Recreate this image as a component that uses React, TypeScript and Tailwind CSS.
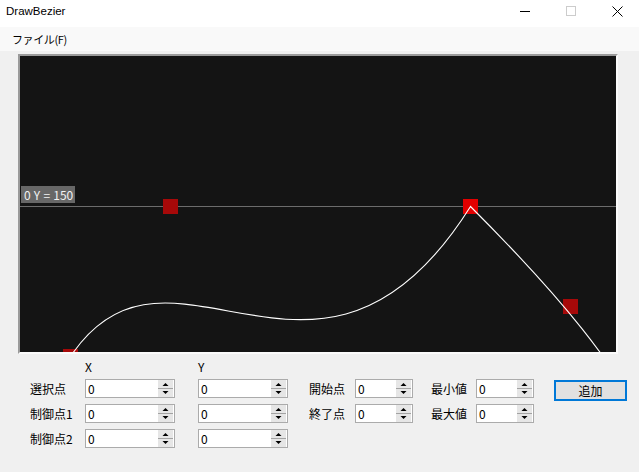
import React from "react";

const JP = { fontFamily: '"Noto Sans CJK JP", "Noto Sans", sans-serif' };

function Spinner() {
  return (
    <svg width="15" height="17" viewBox="0 0 15 17" className="block">
      <rect x="0" y="0" width="15" height="17" fill="#e6e6e6" />
      <rect x="0" y="8" width="15" height="1" fill="#a3a3a3" />
      <polygon points="4.5,6 10.5,6 7.5,3" fill="#000" />
      <polygon points="4.5,11 10.5,11 7.5,14" fill="#000" />
    </svg>
  );
}

function NumBox({ wide }: { wide?: boolean }) {
  return (
    <div
      className={`${wide ? "w-[90px]" : "w-[58px]"} h-[19px] border border-[#ababab] bg-white flex items-stretch`}
    >
      <div className="flex-1 pl-[2px] text-[12px] leading-[17px] text-black">0</div>
      <div className="py-0 pr-[1px]">
        <Spinner />
      </div>
    </div>
  );
}

function Label({ children, cls }: { children: React.ReactNode; cls: string }) {
  return <div className={`${cls} flex items-center text-[12px] text-black whitespace-nowrap`}>{children}</div>;
}

export default function App() {
  return (
    <div className="w-[639px] h-[472px] overflow-hidden bg-[#f0f0f0] flex flex-col" style={JP}>
      {/* title bar */}
      <div className="w-[640px] shrink-0 h-[27px] bg-white flex items-start">
        <div
          className="pl-[6px] pt-[5px] text-[11.5px] leading-[13px] text-black"
          style={{ fontFamily: '"Liberation Sans", "Noto Sans", sans-serif' }}
        >
          DrawBezier
        </div>
        <div className="ml-auto flex">
          <div className="w-[46px] h-[22px] flex items-center justify-center">
            <svg width="10" height="10" viewBox="0 0 10 10">
              <rect x="0" y="5" width="10" height="1" fill="#000" />
            </svg>
          </div>
          <div className="w-[46px] h-[22px] flex items-center justify-center">
            <svg width="10" height="10" viewBox="0 0 10 10">
              <rect x="0.5" y="0.5" width="9" height="9" fill="none" stroke="#cccccc" strokeWidth="1" />
            </svg>
          </div>
          <div className="w-[46px] h-[22px] flex items-center justify-center">
            <svg width="11" height="11" viewBox="0 0 11 11">
              <path d="M0.5 0.5 L10.5 10.5 M10.5 0.5 L0.5 10.5" stroke="#000" strokeWidth="1" />
            </svg>
          </div>
        </div>
      </div>

      {/* menu bar */}
      <div className="h-[24px] bg-[#f9f9f9] flex items-center pl-[12px]">
        <span className="text-[11px] tracking-[-0.4px] text-black">ファイル(F)</span>
      </div>

      {/* canvas */}
      <div className="mt-[3px] ml-[18px] w-[600px] h-[300px] border-2 border-t-[#9a9a9a] border-l-[#9a9a9a] border-r-[#fbfbfb] border-b-[#fbfbfb] bg-[#141414] relative overflow-hidden">
        <svg width="596" height="296" viewBox="20 56 596 296" className="absolute inset-0 block">
          <rect x="20" y="206" width="596" height="1" fill="#6c6c6c" shapeRendering="crispEdges" />
          <rect x="163" y="199" width="15" height="15" fill="#a60909" shapeRendering="crispEdges" />
          <rect x="463" y="199" width="15" height="15" fill="#e20000" shapeRendering="crispEdges" />
          <rect x="563" y="299" width="15" height="15" fill="#a60909" shapeRendering="crispEdges" />
          <rect x="63" y="349" width="15" height="15" fill="#a60909" shapeRendering="crispEdges" />
          <path
            d="M70.5 356.5 C170.5 206.5, 320 446, 470.5 206.5 C570.5 306.5, 605 355, 660 440"
            fill="none"
            stroke="#ffffff"
            strokeWidth="1.1"
          />
        </svg>
        <div className="absolute left-[1px] top-[130px] w-[54px] h-[17px] bg-[#676767] text-[#f2f2f2] text-[12px] leading-[17px] pl-[3px] whitespace-pre [word-spacing:0.5px]">
          0 Y = 150
        </div>
      </div>

      {/* controls */}
      <div className="ml-[30px] grid grid-cols-[55px_90px_23px_90px_21px_46px_58px_18px_45px_58px_20px_73px] grid-rows-[19px_19px_19px_19px] gap-y-[6px]">
        <div className="col-start-2 row-start-1 flex items-end text-[12px] leading-[13px] text-black">X</div>
        <div className="col-start-4 row-start-1 flex items-end text-[12px] leading-[13px] text-black">Y</div>

        <Label cls="col-start-1 row-start-2">選択点</Label>
        <div className="col-start-2 row-start-2"><NumBox wide /></div>
        <div className="col-start-4 row-start-2"><NumBox wide /></div>

        <Label cls="col-start-1 row-start-3">制御点1</Label>
        <div className="col-start-2 row-start-3"><NumBox wide /></div>
        <div className="col-start-4 row-start-3"><NumBox wide /></div>

        <Label cls="col-start-1 row-start-4">制御点2</Label>
        <div className="col-start-2 row-start-4"><NumBox wide /></div>
        <div className="col-start-4 row-start-4"><NumBox wide /></div>

        <Label cls="col-start-6 row-start-2">開始点</Label>
        <div className="col-start-7 row-start-2"><NumBox /></div>
        <Label cls="col-start-6 row-start-3">終了点</Label>
        <div className="col-start-7 row-start-3"><NumBox /></div>

        <Label cls="col-start-9 row-start-2">最小値</Label>
        <div className="col-start-10 row-start-2"><NumBox /></div>
        <Label cls="col-start-9 row-start-3">最大値</Label>
        <div className="col-start-10 row-start-3"><NumBox /></div>

        <div className="col-start-12 row-start-2 self-start mt-[1px] h-[21px] border-2 border-[#0078d7] bg-[#e1e1e1] flex items-center justify-center text-[12px] text-black">
          追加
        </div>
      </div>
    </div>
  );
}
